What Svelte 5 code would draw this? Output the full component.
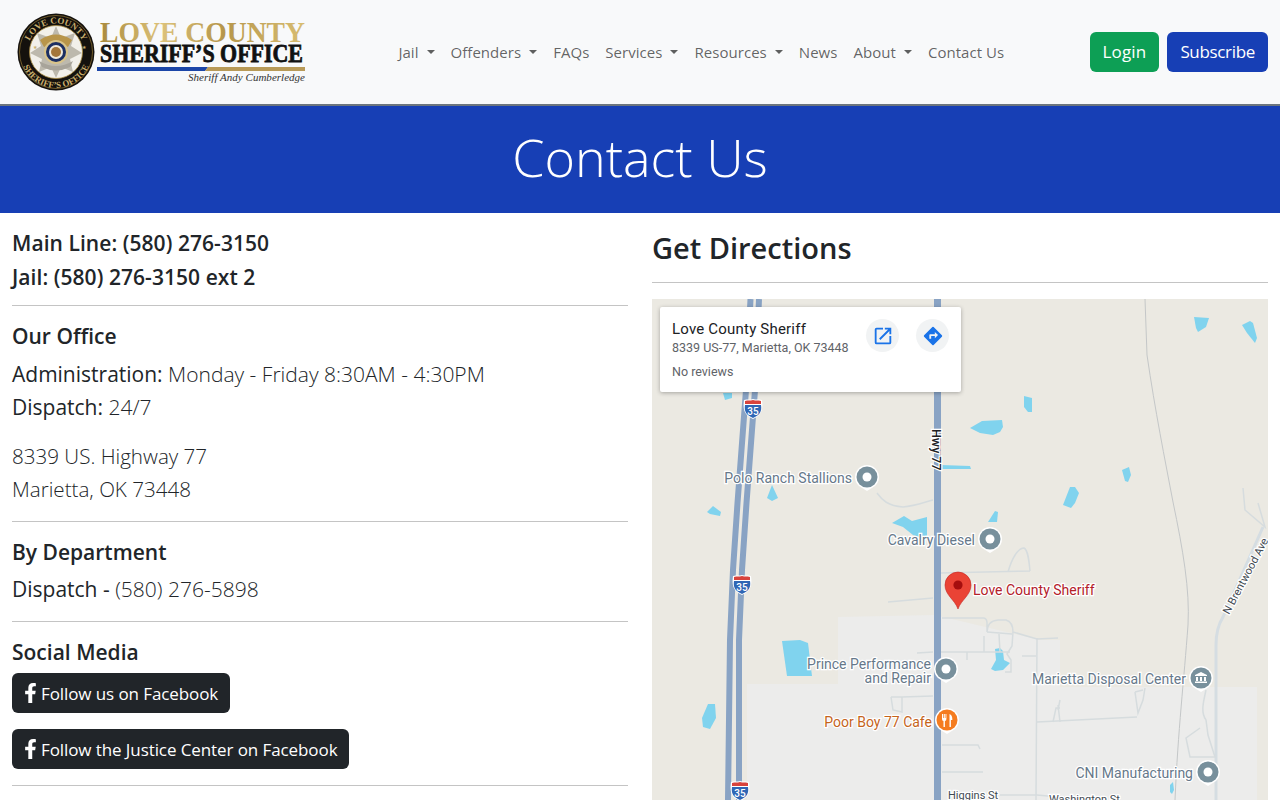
<script>
  const navItems = [
    { label: "Jail", caret: true },
    { label: "Offenders", caret: true },
    { label: "FAQs" },
    { label: "Services", caret: true },
    { label: "Resources", caret: true },
    { label: "News" },
    { label: "About", caret: true },
    { label: "Contact Us" },
  ];

  // map coordinates are page coordinates, the svg viewBox starts at the map corner
  const lakes = [
    "1194,317 1209,318 1206,327 1198,332 1196,328",
    "1242,325 1250,321 1253,323 1257,338 1255,343 1247,333",
    "1024,396 1032,398 1032,412 1028,412 1024,407",
    "970,428 982,421 1002,420 1003,427 1000,432 993,435 980,433",
    "941,465 970,466 971,469 941,469",
    "1122,470 1129,467 1131,475 1128,482 1125,481",
    "1063,505 1070,487 1075,487 1079,493 1075,503 1071,508",
    "723,393 732,393 732,398 725,400",
    "767,498 772,485 778,498 772,501",
    "707,512 713,506 721,512 720,516 710,514",
    "782,641 800,640 808,643 812,676 787,676",
    "702,718 708,704 715,704 716,718 710,729 703,727",
    "892,523 904,516 912,521 927,517 927,539 913,535 903,527",
    "988,522 995,511 998,512 997,522",
    "991,669 996,660 995,649 1000,648 1003,651 1004,660 1010,663 1003,670 995,671",
    "1170,785 1173,782 1174,790 1172,794 1170,792",
  ];

  const minorRoads = [
    "M940 573 L1030 571 M1008 572 C1012 558 1018 548 1024 548 C1028 550 1029 560 1030 571",
    "M888 602 L933 598",
    "M942 618 L983 618 Q987 618 987 623 L987 632 Q987 621 998 620 L1006 620 Q1013 622 1013 632 L1037 639 L1058 638",
    "M987 632 L1012 634 M984 636 L984 652 M999 634 L1000 652 M1013 632 L1012 646 L1007 654 L1011 660 L1011 672 L1005 672",
    "M1037 638 L1036 800",
    "M940 652 L1010 652 M967 652 L967 660 M1022 656 L1036 656",
    "M1037 722 L1137 717 M1135 692 L1138 713 L1143 700 L1145 688 M1135 692 L1143 690",
    "M1000 795 L1037 795 L1090 800",
    "M942 745 L978 745 L980 749",
    "M942 772 L983 772",
    "M891 697 L902 697 L933 696 M891 697 L893 710 L902 712 L902 697",
    "M917 653 L933 652",
    "M877 493 C882 500 888 506 903 507 C915 506 925 502 933 500",
    "M1058 710 L1060 700 M1060 722 L1058 705 M1053 722 L1056 708 L1060 708",
    "M1206 690 C1204 700 1200 712 1206 720 L1208 735 L1215 757 L1190 757 L1186 738 L1200 728",
    "M1243 488 L1245 510 L1265 527 L1258 503",
  ];

  const roundPins = [
    { x: 867, y: 477 },
    { x: 990, y: 539 },
    { x: 946, y: 669 },
    { x: 1208, y: 772 },
  ];

  const labels = [
    { x: 852, y: 483, text: "Polo Ranch Stallions" },
    { x: 975, y: 545, text: "Cavalry Diesel" },
    { x: 931, y: 669, text: "Prince Performance" },
    { x: 931, y: 683, text: "and Repair" },
    { x: 1186, y: 684, text: "Marietta Disposal Center" },
    { x: 1193, y: 778, text: "CNI Manufacturing" },
  ];

  const shields = [
    { x: 753, y: 409 },
    { x: 742, y: 585 },
    { x: 740, y: 791 },
  ];
</script>

<header class="navbar">
  <a class="brand" href="#top" aria-label="Love County Sheriff's Office">
    <svg width="298" height="84" viewBox="0 0 298 84">
      <defs>
        <linearGradient id="gold" x1="0" x2="1" y1="0" y2="0">
          <stop offset="0" stop-color="#a98a3d" />
          <stop offset="0.3" stop-color="#dcc27a" />
          <stop offset="0.6" stop-color="#b6964a" />
          <stop offset="1" stop-color="#d8bd72" />
        </linearGradient>
        <path id="ring-top" d="M12.5 43 A28.5 28.5 0 0 1 69.5 43" />
        <path id="ring-bottom" d="M5 43 A36 36 0 0 0 77 43" />
      </defs>
      <circle cx="41" cy="43" r="38.5" fill="#14110d" />
      <circle cx="41" cy="43" r="36.5" fill="none" stroke="#a98a3d" stroke-width="0.6" />
      <circle cx="41" cy="43" r="26.5" fill="#f2f0ea" stroke="#a98a3d" stroke-width="0.8" />
      <text class="ring"><textPath href="#ring-top" startOffset="50%" text-anchor="middle">LOVE COUNTY</textPath></text>
      <text class="ring"><textPath href="#ring-bottom" startOffset="50%" text-anchor="middle">SHERIFF’S OFFICE</textPath></text>
      <text class="ring-star" x="20" y="40">★</text>
      <text class="ring-star" x="69" y="40" text-anchor="middle">★</text>
      <polygon
        points="41,17 46,29 60,24 56,37 67,44 55,50 58,63 46,58 41,69 36,58 24,63 27,50 15,44 26,37 22,24 36,29"
        fill="#bdb9ad"
      />
      <path d="M25 31 Q41 20 57 31 L53 38 Q41 31 29 38Z" fill="#b8954a" />
      <path d="M24 52 Q41 62 58 52 L55 58 Q41 65 27 58Z" fill="#a8a49a" />
      <circle cx="41" cy="43" r="12" fill="#d9c48a" />
      <circle cx="41" cy="43" r="10" fill="#1c2f63" />
      <circle cx="41" cy="43" r="7" fill="#f0eadb" />
      <circle cx="41" cy="43" r="5" fill="#a4763a" />

      <text class="county" x="85" y="33" textLength="205" lengthAdjust="spacingAndGlyphs">LOVE COUNTY</text>
      <text class="office" x="85" y="53" textLength="203" lengthAdjust="spacingAndGlyphs">SHERIFF’S OFFICE</text>
      <polygon points="82,58 193,58 190,62 82,62" fill="#1c46a8" />
      <polygon points="193,58 290,58 290,62 190,62" fill="#b89a58" />
      <text class="sheriff" x="290" y="72" text-anchor="end" textLength="117">Sheriff Andy Cumberledge</text>
    </svg>
  </a>

  <nav>
    {#each navItems as item}
      <a href="#top" class:caret={item.caret}>{item.label}</a>
    {/each}
  </nav>

  <div class="account">
    <a class="btn login" href="#top">Login</a>
    <a class="btn subscribe" href="#top">Subscribe</a>
  </div>
</header>

<section class="hero">
  <h1>Contact Us</h1>
</section>

<main class="content">
  <div class="col">
    <h4 class="phone">Main Line: (580) 276-3150</h4>
    <h4 class="phone">Jail: (580) 276-3150 ext 2</h4>
    <hr class="first" />
    <h5>Our Office</h5>
    <p class="lead"><span>Administration:</span> Monday - Friday 8:30AM - 4:30PM<br /><span>Dispatch:</span> 24/7</p>
    <p class="lead address">8339 US. Highway 77<br />Marietta, OK 73448</p>
    <hr />
    <h5>By Department</h5>
    <p class="lead"><span>Dispatch -</span> (580) 276-5898</p>
    <hr />
    <h5 class="social">Social Media</h5>
    <a class="fb" href="#top">
      <svg viewBox="0 0 320 512" width="13" height="20" aria-hidden="true">
        <path fill="currentColor" d="M279.14 288l14.22-92.66h-88.91v-60.13c0-25.35 12.42-50.06 52.24-50.06h40.42V6.26S260.43 0 225.36 0c-73.22 0-121.08 44.38-121.08 124.72v70.62H22.89V288h81.39v224h100.17V288z" />
      </svg>
      Follow us on Facebook
    </a>
    <a class="fb" href="#top">
      <svg viewBox="0 0 320 512" width="13" height="20" aria-hidden="true">
        <path fill="currentColor" d="M279.14 288l14.22-92.66h-88.91v-60.13c0-25.35 12.42-50.06 52.24-50.06h40.42V6.26S260.43 0 225.36 0c-73.22 0-121.08 44.38-121.08 124.72v70.62H22.89V288h81.39v224h100.17V288z" />
      </svg>
      Follow the Justice Center on Facebook
    </a>
    <hr class="last" />
  </div>

  <div class="col">
    <h2>Get Directions</h2>
    <hr class="under-title" />
    <div class="map">
      <svg viewBox="652 299 616 501" width="616" height="501">
        <rect x="652" y="299" width="616" height="501" fill="#ebe9e2" />
        <polygon points="747,684 838,684 838,617 935,615 1040,640 1060,640 1060,687 1257,687 1257,800 747,800" fill="#ececeb" />

        {#each lakes as points}
          <polygon {points} fill="#80d3ee" />
        {/each}

        <path class="rail" d="M1145 299 L1147 355 C1155 410 1165 460 1173 502 C1183 550 1190 590 1188 625 C1184 680 1178 730 1175 800" />
        <path class="avenue" d="M1263 527 L1223 617 C1218 625 1216 632 1216 645 L1216 800" />
        {#each minorRoads as d}
          <path class="minor" {d} />
        {/each}

        <path class="highway" d="M750.5 299 L746 390 L737.5 503 L733 570 L730 640 L728 800" />
        <path class="highway" d="M759 299 L755 390 L746.5 503 L742 570 L739 640 L739 800" />
        <path class="highway wide" d="M937.5 299 L937.5 800" />

        {#each shields as s}
          <g transform="translate({s.x} {s.y})">
            <path d="M-9 -9 C-5 -10 -3 -9 0 -10 C3 -9 5 -10 9 -9 C10 -2 10 6 0 10 C-10 6 -10 -2 -9 -9Z" fill="#fff" />
            <path d="M-8 -4 L8 -4 C9 2 7 6 0 9 C-7 6 -9 2 -8 -4Z" fill="#2f66b5" />
            <path d="M-8 -8 C-5 -9 -3 -8 0 -9 C3 -8 5 -9 8 -8 L8 -5 L-8 -5Z" fill="#d8433c" />
            <text class="shield" x="0" y="6" text-anchor="middle">35</text>
          </g>
        {/each}

        <text class="hwy" transform="translate(932 429) rotate(90)">Hwy 77</text>
        <text class="street" x="948" y="799">Higgins St</text>
        <text class="street" x="1049" y="803">Washington St</text>
        <text class="street" transform="translate(1229 615) rotate(-62)">N Brentwood Ave</text>

        {#each roundPins as p}
          <g transform="translate({p.x} {p.y})">
            <path d="M0 14 L-8 9 A12 12 0 1 1 8 9Z" fill="#fff" />
            <circle r="10.5" fill="#78909c" />
            <circle r="4.5" fill="#fff" />
          </g>
        {/each}

        <g transform="translate(1201 678)">
          <path d="M0 14 L-8 9 A12 12 0 1 1 8 9Z" fill="#fff" />
          <circle r="10.5" fill="#78909c" />
          <path d="M-6 -3 L0 -6 L6 -3 L6 -2 L-6 -2Z M-5 -1 h2 v4 h-2Z M-1 -1 h2 v4 h-2Z M3 -1 h2 v4 h-2Z M-6 3.5 h12 v1.5 h-12Z" fill="#fff" />
        </g>

        <g transform="translate(947 720)">
          <path d="M0 14 L-8 9 A12 12 0 1 1 8 9Z" fill="#fff" />
          <circle r="10.5" fill="#f57c1f" />
          <path d="M-5 -6 v5 q0 2 1.5 2 v6 h1.4 v-6 q1.5 0 1.5 -2 v-5 h-.9 v4 h-.7 v-4 h-.9 v4 h-.7 v-4Z M2.5 -6 q2.8 1 2.8 5 v1 h-1.4 v7 h-1.4Z" fill="#fff" />
        </g>

        {#each labels as l}
          <text class="poi" x={l.x} y={l.y} text-anchor="end">{l.text}</text>
        {/each}
        <text class="poi cafe" x="932" y="727" text-anchor="end">Poor Boy 77 Cafe</text>

        <path d="M958 609 C955 600 945 595 945 585 A13 13 0 0 1 971 585 C971 595 961 600 958 609Z" fill="#ea4335" stroke="#c5221f" stroke-width="0.6" />
        <circle cx="958" cy="585" r="4.6" fill="#a50e0e" />
        <text class="poi place" x="973" y="595">Love County Sheriff</text>
      </svg>

      <div class="card">
        <div class="card-text">
          <div class="place-name">Love County Sheriff</div>
          <div class="place-line">8339 US-77, Marietta, OK 73448</div>
          <div class="place-line reviews">No reviews</div>
        </div>
        <span class="round">
          <svg viewBox="0 0 24 24" width="22" height="22"><path fill="#1a73e8" d="M19 19H5V5h7V3H5a2 2 0 0 0-2 2v14a2 2 0 0 0 2 2h14a2 2 0 0 0 2-2v-7h-2v7zM14 3v2h3.59l-9.83 9.83 1.41 1.41L19 6.41V10h2V3h-7z" /></svg>
        </span>
        <span class="round">
          <svg viewBox="0 0 24 24" width="22" height="22"><path fill="#1a73e8" d="M21.71 11.29l-9-9a1 1 0 0 0-1.42 0l-9 9a1 1 0 0 0 0 1.42l9 9a1 1 0 0 0 1.42 0l9-9a1 1 0 0 0 0-1.42zM14 14.5V12h-4v3H8v-4a1 1 0 0 1 1-1h5V7.5l3.5 3.5-3.5 3.5z" /></svg>
        </span>
      </div>
    </div>
  </div>
</main>

<style>
  :global(body) {
    font-family: "Open Sans", "Noto Sans", sans-serif;
    color: #212529;
    background: #fff;
  }
  a {
    text-decoration: none;
  }

  .navbar {
    display: flex;
    align-items: center;
    height: 104px;
    padding: 0 12px 0 15px;
    background: #f8f9fa;
    border-bottom: 2px solid #6c757d;
  }
  .brand {
    display: flex;
    margin-top: -2px;
  }
  .brand svg {
    display: block;
  }
  nav {
    display: flex;
    margin: 0 auto;
  }
  nav a {
    display: flex;
    align-items: center;
    padding: 8px;
    font-size: 15px;
    line-height: 24px;
    letter-spacing: 0.04px;
    color: rgba(0, 0, 0, 0.62);
  }
  .caret::after {
    content: "";
    margin-left: 8px;
    border-top: 4.8px solid;
    border-right: 4.8px solid transparent;
    border-left: 4.8px solid transparent;
  }
  .account {
    display: flex;
    gap: 8px;
    margin-top: -1px;
  }
  .btn {
    display: block;
    height: 40px;
    padding: 0 13px;
    border-radius: 6px;
    font-size: 17px;
    line-height: 40px;
    color: #fff;
  }
  .login {
    background: #0d9f55;
    letter-spacing: 0.15px;
  }
  .subscribe {
    background: #173fb5;
    letter-spacing: -0.33px;
  }

  .hero {
    height: 107px;
    background: #173fb5;
    text-align: center;
  }
  h1 {
    margin: 0;
    font-size: 52px;
    font-weight: 300;
    line-height: 101px;
    color: #fff;
  }

  .content {
    display: grid;
    grid-template-columns: 1fr 1fr;
    height: 587px;
    overflow: hidden;
  }
  .col {
    padding: 0 12px;
    min-width: 0;
  }
  .phone {
    margin: 0;
    font-size: 21px;
    font-weight: 600;
    line-height: 34px;
    letter-spacing: 0.06px;
  }
  .phone:first-child {
    margin-top: 13px;
  }
  hr {
    height: 1px;
    margin: 11px 0 13px;
    border: 0;
    background: #c4c4c4;
  }
  h5 {
    margin: 0 0 4px;
    font-size: 21px;
    font-weight: 600;
    line-height: 34px;
  }
  hr.first + h5 {
    margin-bottom: 5px;
  }
  .lead {
    margin: 0 0 16px;
    font-size: 21px;
    font-weight: 300;
    line-height: 33px;
  }
  .lead span {
    font-weight: 400;
  }
  .lead.address {
    font-size: 20.6px;
  }
  .lead.address,
  .lead:has(+ hr) {
    margin-bottom: 15px;
  }
  .fb {
    display: flex;
    align-items: center;
    gap: 4px;
    width: fit-content;
    height: 40px;
    margin-bottom: 16px;
    padding: 0 12px;
    border-radius: 6px;
    background: #212529;
    font-size: 17px;
    letter-spacing: -0.09px;
    color: #fff;
  }
  hr.last {
    margin-top: 0;
  }

  h2 {
    margin: 14px 0 0;
    font-size: 29px;
    font-weight: 600;
    line-height: 42px;
  }
  hr.under-title {
    margin: 13px 0 16px;
  }

  .map {
    position: relative;
    height: 501px;
    overflow: hidden;
  }
  .map > svg {
    display: block;
  }
  .highway {
    fill: none;
    stroke: #89a3c4;
    stroke-width: 6;
  }
  .highway.wide {
    stroke-width: 7;
  }
  .minor {
    fill: none;
    stroke: #d6dcde;
    stroke-width: 1.5;
  }
  .avenue {
    fill: none;
    stroke: #d5dde2;
    stroke-width: 3;
  }
  .rail {
    fill: none;
    stroke: #c4c7c8;
    stroke-width: 1;
  }
  .poi,
  .street,
  .hwy,
  .shield {
    font-family: Roboto, sans-serif;
  }
  .poi {
    font-size: 14px;
    fill: #66788a;
    paint-order: stroke;
    stroke: #fff;
    stroke-width: 2.5px;
  }
  .cafe {
    fill: #c5641c;
  }
  .place {
    fill: #b3202a;
  }
  .street,
  .hwy {
    font-size: 11px;
    fill: #3f4a52;
    paint-order: stroke;
    stroke: #fff;
    stroke-width: 2.5px;
  }
  .hwy {
    font-size: 12.5px;
    font-weight: 500;
    fill: #202124;
  }
  .shield {
    font-size: 10px;
    font-weight: 500;
    fill: #fff;
  }

  .card {
    position: absolute;
    top: 8px;
    left: 8px;
    display: flex;
    align-items: flex-start;
    gap: 17px;
    box-sizing: border-box;
    width: 301px;
    height: 85px;
    padding: 12px 12px 0;
    background: #fff;
    border-radius: 2px;
    box-shadow: 0 1px 4px rgba(0, 0, 0, 0.3);
    font-family: Roboto, sans-serif;
  }
  .card-text {
    flex: 1;
    min-width: 0;
  }
  .place-name {
    font-size: 15px;
    line-height: 20px;
    letter-spacing: 0.2px;
    color: #202124;
  }
  .place-line {
    font-size: 12.5px;
    line-height: 18px;
    white-space: nowrap;
    color: #5f6368;
  }
  .reviews {
    margin-top: 6px;
  }
  .round {
    flex: none;
    display: flex;
    align-items: center;
    justify-content: center;
    width: 33px;
    height: 33px;
    border-radius: 50%;
    background: #f1f3f4;
  }

  .county {
    font-family: "Liberation Serif", serif;
    font-size: 30px;
    font-weight: 700;
    fill: url(#gold);
  }
  .office {
    font-family: "Liberation Serif", serif;
    font-size: 26px;
    font-weight: 700;
    fill: #111;
    stroke: #111;
    stroke-width: 0.8px;
  }
  .sheriff {
    font-family: "Liberation Serif", serif;
    font-size: 11px;
    font-style: italic;
    fill: #333;
  }
  .ring {
    font-family: "Liberation Serif", serif;
    font-size: 9px;
    font-weight: 700;
    fill: #c9ae6c;
  }
  .ring-star {
    font-size: 5px;
    fill: #c9ae6c;
    text-anchor: middle;
  }
</style>
